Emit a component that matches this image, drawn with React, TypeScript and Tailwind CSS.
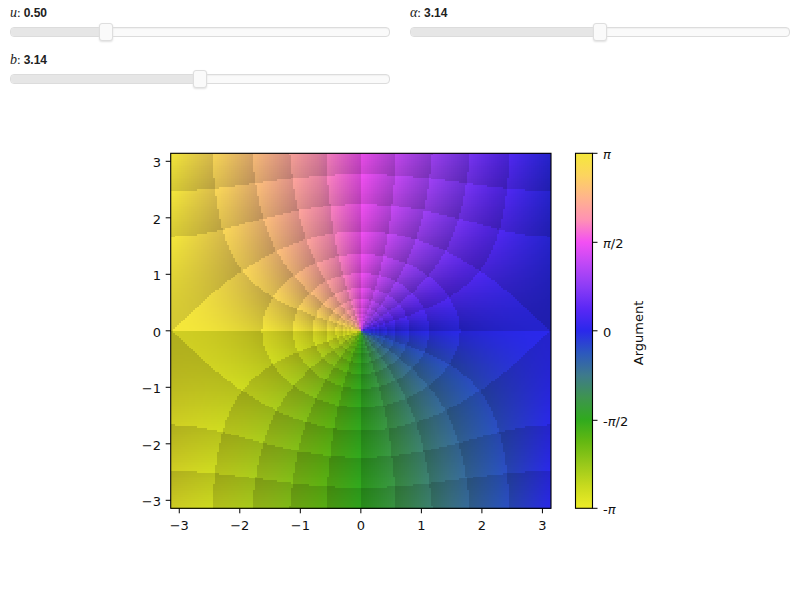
import { useMemo } from "react";

const sliders = [
  { name: "u", value: "0.50", pct: 25 },
  { name: "α", value: "3.14", pct: 50 },
  { name: "b", value: "3.14", pct: 50 },
];

// cyclic map sampled from -pi to pi
const stops = [
  [238, 236, 40],
  [200, 218, 30],
  [152, 200, 26],
  [100, 184, 18],
  [48, 170, 30],
  [62, 148, 80],
  [62, 122, 140],
  [44, 88, 190],
  [42, 40, 235],
  [90, 40, 245],
  [140, 60, 246],
  [190, 72, 246],
  [243, 80, 243],
  [255, 145, 180],
  [255, 180, 140],
  [252, 212, 95],
  [245, 232, 58],
];

function phaseColor(t: number, k = 1) {
  const p = Math.min(t, 0.99999) * (stops.length - 1);
  const i = Math.floor(p);
  const f = p - i;
  const c = stops[i].map((v, j) => Math.round((v + (stops[i + 1][j] - v) * f) * k));
  return `rgb(${c[0]},${c[1]},${c[2]})`;
}

const saw = (x: number, dx: number) => x / dx - Math.floor(x / dx);

const N = 190;
const X0 = 170.7;
const X1 = 551;
const Y0 = 153.3;
const Y1 = 508.3;

function buildCells() {
  const cells: { x: number; y: number; fill: string }[] = [];
  const dx = (X1 - X0) / N;
  const dy = (Y1 - Y0) / N;
  const step = (2 * Math.PI) / 20;
  for (let r = 0; r < N; r++) {
    for (let c = 0; c < N; c++) {
      const x = -Math.PI + ((c + 0.5) / N) * 2 * Math.PI;
      const y = Math.PI - ((r + 0.5) / N) * 2 * Math.PI;
      // f(z) = sin(u z), u = 0.5
      const re = Math.sin(x / 2) * Math.cosh(y / 2);
      const im = Math.cos(x / 2) * Math.sinh(y / 2);
      const arg = Math.atan2(im, re);
      const mag = Math.hypot(re, im);
      const k = 0.74 + 0.26 * (0.5 * saw(arg, step) + 0.5 * saw(Math.log(mag), step));
      cells.push({
        x: X0 + c * dx,
        y: Y0 + r * dy,
        fill: phaseColor((arg + Math.PI) / (2 * Math.PI), k),
      });
    }
  }
  return cells;
}

function Slider({ name, value, pct }: { name: string; value: string; pct: number }) {
  return (
    <div className="h-[47px] pt-[5px]">
      <div className="flex h-4 items-center text-[12px] leading-4 text-[#212121]">
        <span className="font-['Liberation_Serif',serif] text-[14px] italic">{name}</span>
        <span className="mr-[3px] font-['Liberation_Serif',serif] text-[13px]">:</span>
        <span className="font-bold">{value}</span>
      </div>
      <div className="relative mt-[6px] h-[10px] rounded-[4px] border border-[#dcdcdc] bg-[#fafafa] shadow-[inset_0_1px_1px_#f0f0f0]">
        <div className="h-full rounded-l-[3px] bg-[#e6e6e6]" style={{ width: `${pct}%` }} />
        <div
          className="absolute top-[-5px] ml-[-7px] h-[18px] w-[14px] rounded-[3px] border border-[#dedede] bg-[#fafafa] shadow-[0_1px_2px_#e0e0e0]"
          style={{ left: `${pct}%` }}
        />
      </div>
    </div>
  );
}

function Figure() {
  const cells = useMemo(buildCells, []);
  const dx = (X1 - X0) / N;
  const dy = (Y1 - Y0) / N;
  const xTicks = [-3, -2, -1, 0, 1, 2, 3];
  const cx = (X0 + X1) / 2;
  const cy = (Y0 + Y1) / 2;
  const sx = (X1 - X0) / (2 * Math.PI);
  const sy = (Y1 - Y0) / (2 * Math.PI);
  const fmt = (v: number) => (v < 0 ? `\u2212${-v}` : `${v}`);
  const barTicks = [
    { y: Y0, off: 5.5, neg: false, pi: true, rest: "" },
    { y: 242.3, off: 5.5, neg: false, pi: true, rest: "/2" },
    { y: cy, off: 6.5, neg: false, pi: false, rest: "0" },
    { y: 420.3, off: 5.5, neg: true, pi: true, rest: "/2" },
    { y: Y1, off: 5.5, neg: true, pi: true, rest: "" },
  ];
  return (
    <svg viewBox="0 100 800 500" className="block h-[500px] w-[800px] font-['DejaVu_Sans',sans-serif] text-[13px]">
      <defs>
        <linearGradient id="bar" x1="0" y1="1" x2="0" y2="0">
          {stops.map((_, i) => (
            <stop key={i} offset={i / (stops.length - 1)} stopColor={phaseColor(i / (stops.length - 1))} />
          ))}
        </linearGradient>
      </defs>
      <g shapeRendering="crispEdges" className="blur-[0.5px]">
        {cells.map((p, i) => (
          <rect key={i} x={p.x} y={p.y} width={dx + 0.4} height={dy + 0.4} fill={p.fill} />
        ))}
      </g>
      <rect x={X0} y={Y0} width={X1 - X0} height={Y1 - Y0} fill="none" stroke="#000" strokeWidth="1.1" />
      {xTicks.map((t) => (
        <g key={t}>
          <line x1={cx + t * sx} x2={cx + t * sx} y1={Y1} y2={Y1 + 5} stroke="#000" />
          <text x={cx + t * sx} y={529.5} textAnchor="middle" fill="#111">
            {fmt(t)}
          </text>
          <line x1={X0 - 5} x2={X0} y1={cy - t * sy} y2={cy - t * sy} stroke="#000" />
          <text x={161} y={cy - t * sy + 6} textAnchor="end" fill="#111">
            {fmt(t)}
          </text>
        </g>
      ))}
      <rect x={575.5} y={Y0} width={17} height={Y1 - Y0} fill="url(#bar)" stroke="#000" strokeWidth="1.1" />
      {barTicks.map((t, i) => (
        <g key={i}>
          <line x1={592.5} x2={597.5} y1={t.y} y2={t.y} stroke="#000" />
          <text x={603} y={t.y + t.off} fill="#111">
            {t.neg ? "-" : ""}
            {t.pi ? <tspan fontStyle="italic">π</tspan> : null}
            {t.rest}
          </text>
        </g>
      ))}
      <text transform="translate(643 333) rotate(-90)" textAnchor="middle" fill="#111">
        Argument
      </text>
    </svg>
  );
}

export default function App() {
  return (
    <div className="h-[600px] w-[800px] overflow-hidden bg-white font-['Liberation_Sans',sans-serif]">
      <div className="grid h-[100px] grid-cols-2 content-start gap-x-5 px-[10px]">
        {sliders.map((s) => (
          <Slider key={s.name} {...s} />
        ))}
      </div>
      <Figure />
    </div>
  );
}
